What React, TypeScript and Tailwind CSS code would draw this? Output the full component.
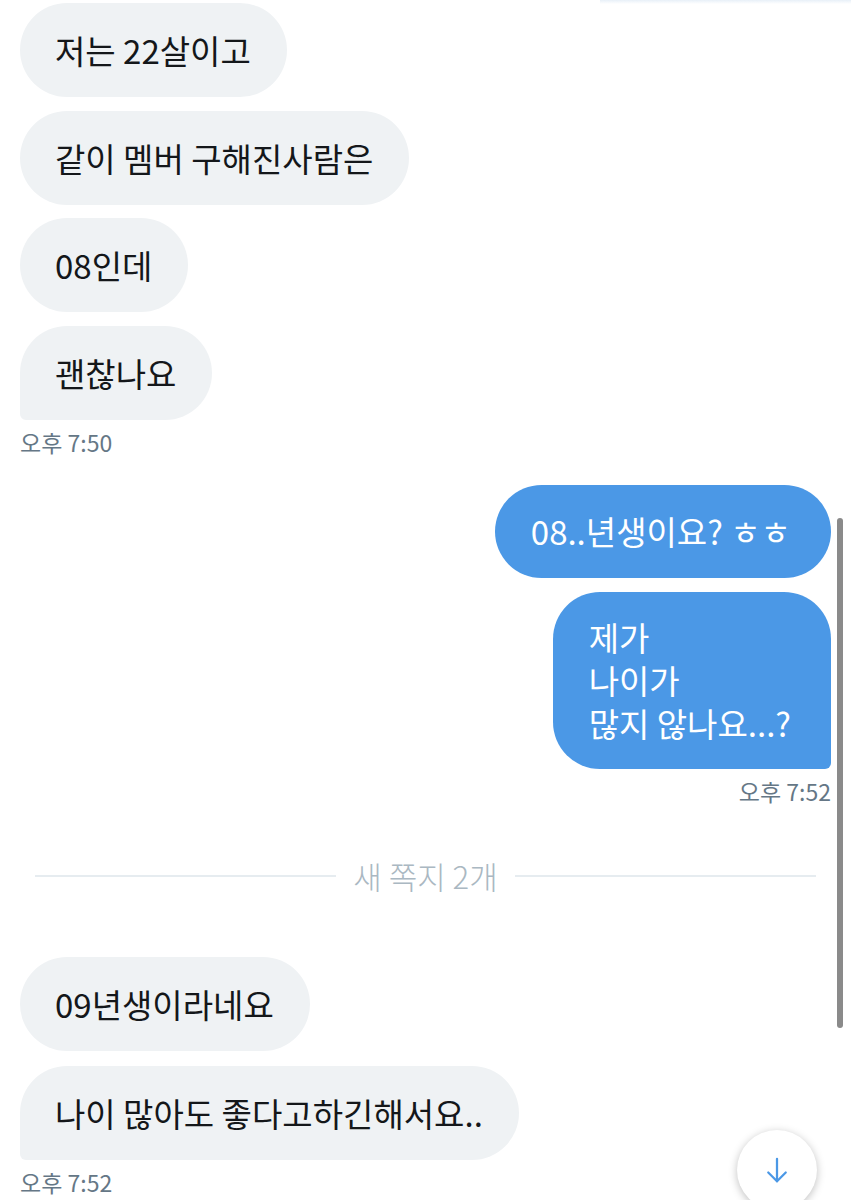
const font = { fontFamily: '"Noto Sans CJK KR", "Noto Sans", sans-serif' };

type Msg = { text: string[]; last?: boolean };

const Left = ({ text, last }: Msg) => (
    <div
        className={`self-start bg-[#eff2f4] text-[#14171a] text-[33px] leading-[43px] pl-[35px] pr-[36px] min-h-[94px] flex flex-col justify-center rounded-[47px] ${last ? "rounded-bl-[6px]" : ""}`}
    >
        {text.map((t, i) => (
            <div key={i}>{t}</div>
        ))}
    </div>
);

const Right = ({ text, last }: Msg) => (
    <div
        className={`self-end bg-[#4b98e6] text-white text-[33px] leading-[43px] pl-[36px] pr-[40px] min-h-[93px] py-[24px] flex flex-col justify-center rounded-[47px] ${last ? "rounded-br-[6px]" : ""}`}
    >
        {text.map((t, i) => (
            <div key={i}>{t}</div>
        ))}
    </div>
);

const Time = ({ t, right }: { t: string; right?: boolean }) => (
    <div className={`text-[23px] leading-[28px] text-[#657786] ${right ? "self-end" : "self-start"}`}>{t}</div>
);

export default function App() {
    return (
        <div className="relative w-[851px] h-[1200px] overflow-hidden bg-white" style={font}>
            {/* header shadow */}
            <div className="absolute top-0 left-[600px] right-0 h-[4px] bg-gradient-to-b from-[#e8f0f8] to-white" />

            <div className="flex flex-col px-[20px] pt-[3px]">
                <Left text={["저는 22살이고"]} />
                <div className="mt-[14px] flex flex-col"><Left text={["같이 멤버 구해진사람은"]} /></div>
                <div className="mt-[13px] flex flex-col"><Left text={["08인데"]} /></div>
                <div className="mt-[14px] flex flex-col"><Left text={["괜찮나요"]} last /></div>
                <div className="mt-[8px] flex flex-col"><Time t="오후 7:50" /></div>

                <div className="mt-[29px] flex flex-col">
                    <Right text={["08..년생이요? ㅎㅎ"]} />
                </div>
                <div className="mt-[14px] flex flex-col">
                    <Right text={["제가", "나이가", "많지 않나요...?"]} last />
                </div>
                <div className="mt-[8px] flex flex-col">
                    <Time t="오후 7:52" right />
                </div>

                {/* divider */}
                <div className="mt-[51px] h-[40px] flex items-center px-[15px]">
                    <div className="flex-1 h-[2px] bg-[#e6ecf0]" />
                    <div className="px-[17px] text-[31px] font-light text-[#aab8c2]">새 쪽지 2개</div>
                    <div className="flex-1 h-[2px] bg-[#e6ecf0]" />
                </div>

                <div className="mt-[61px] flex flex-col"><Left text={["09년생이라네요"]} /></div>
                <div className="mt-[15px] flex flex-col"><Left text={["나이 많아도 좋다고하긴해서요.."]} last /></div>
                <div className="mt-[8px] flex flex-col"><Time t="오후 7:52" /></div>
            </div>

            {/* scrollbar */}
            <div className="absolute left-[837px] top-[518px] w-[6px] h-[510px] rounded-full bg-[#8a8a8a]" />

            {/* scroll down button */}
            <div className="absolute left-[737px] top-[1130px] w-[80px] h-[80px] rounded-full bg-white shadow-[0_2px_8px_rgba(0,0,0,0.25)] flex items-center justify-center">
                <svg width="30" height="30" viewBox="0 0 24 24" fill="none" stroke="#4b98e6" strokeWidth="1.8" strokeLinecap="round" strokeLinejoin="round">
                    <path d="M12 3v18" />
                    <path d="M5 14l7 7 7-7" />
                </svg>
            </div>
        </div>
    );
}
